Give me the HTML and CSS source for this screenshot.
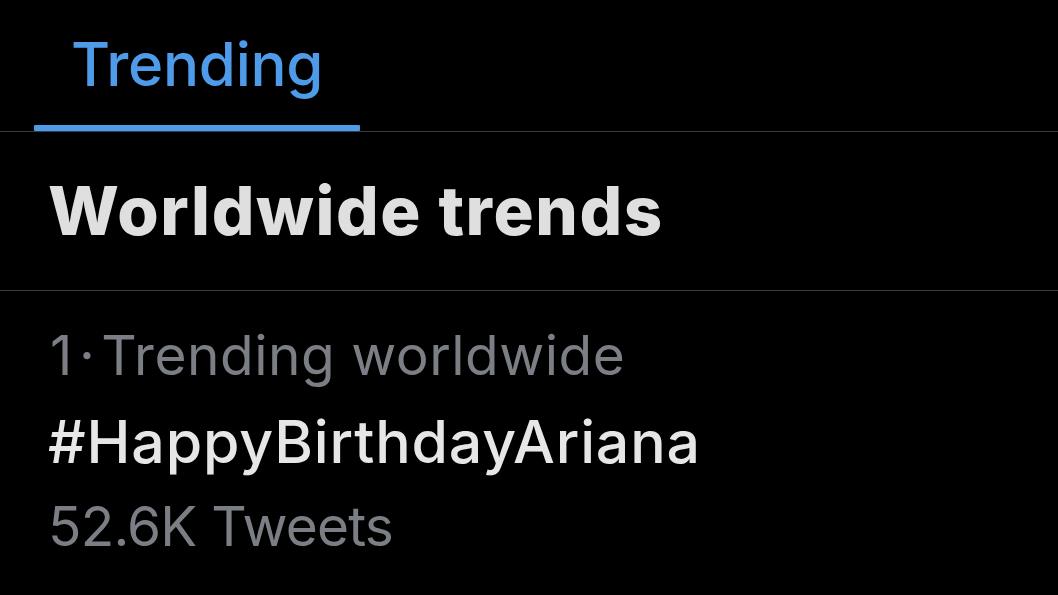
FILE: index.html
```html
<!DOCTYPE html>
<html lang="en">
<head>
<meta charset="utf-8">
<title>Trending</title>
<link rel="stylesheet" href="styles.css">
</head>
<body>
<div class="screen">
  <header class="tabs">
    <div class="tab tab-active">
      <span class="tab-label">Trending</span>
      <span class="tab-indicator"></span>
    </div>
  </header>
  <section class="section-head">
    <h1 class="section-title">Worldwide trends</h1>
  </section>
  <article class="trend">
    <div class="trend-meta"><span class="rank">1</span><span class="dot">·</span><span>Trending worldwide</span></div>
    <div class="trend-name">#HappyBirthdayAriana</div>
    <div class="trend-count">52.6K Tweets</div>
  </article>
</div>
</body>
</html>
```

FILE: styles.css
```css
html, body {
  margin: 0;
  padding: 0;
  background: #000;
}

.screen {
  width: 1058px;
  height: 595px;
  overflow: hidden;
  background: #000;
  font-family: Inter, "Noto Sans", "Liberation Sans", sans-serif;
}

.tabs {
  display: flex;
  height: 131px;
  border-bottom: 1px solid #3a3c3f;
  box-sizing: content-box;
}

.tab {
  display: flex;
  flex-direction: column;
  align-items: center;
  margin-left: 34px;
  width: 326px;
}

.tab-label {
  padding-top: 34px;
  height: 125px;
  box-sizing: border-box;
  font-size: 60px;
  line-height: 60px;
  font-weight: 500;
  color: #4e9bea;
  letter-spacing: -0.3px;
}

.tab-indicator {
  display: block;
  width: 100%;
  height: 6px;
  background: #4e9bea;
  border-radius: 1px;
}

.section-head {
  padding: 46px 48px 46px;
  border-bottom: 1px solid #3a3c3f;
}

.section-title {
  margin: 0;
  font-size: 67px;
  line-height: 66px;
  font-weight: 800;
  color: #dfdfdf;
  letter-spacing: 1.6px;
}

.trend {
  padding: 22px 48px 0;
  display: flex;
  flex-direction: column;
}

.trend-meta {
  font-size: 55px;
  line-height: 84px;
  color: #7b7f85;
  display: flex;
  letter-spacing: 0.5px;
}

.rank {
  margin-left: 2px;
}

.dot {
  margin: 0 6px 0 6px;
}

.trend-name {
  font-size: 59px;
  line-height: 89px;
  color: #e6e6e6;
  font-weight: 500;
  letter-spacing: 0.85px;
}

.trend-count {
  font-size: 55px;
  line-height: 80px;
  color: #7b7f85;
  letter-spacing: -0.8px;
}
```
